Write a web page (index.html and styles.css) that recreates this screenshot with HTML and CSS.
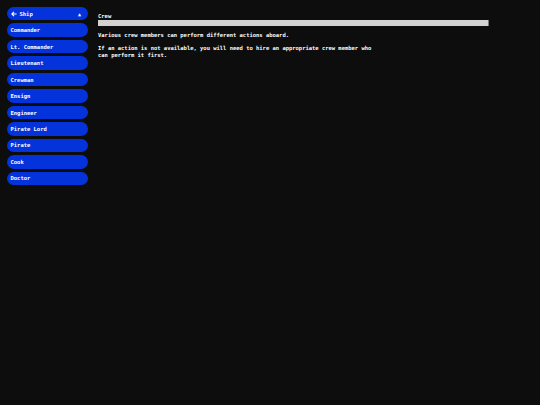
FILE: index.html
```html
<!DOCTYPE html>
<html>
<head>
<meta charset="utf-8">
<link rel="stylesheet" href="styles.css">
</head>
<body>
<div class="app">
  <nav class="sidebar">
    <button class="btn btn-head"><svg class="arrow" width="6" height="6" viewBox="0 0 6 6"><path d="M5.6 3H0.8M3 0.8L0.8 3L3 5.2" fill="none" stroke="#fff" stroke-width="1.1"/></svg><span class="label">Ship</span><span class="caret">▲</span></button>
    <button class="btn">Commander</button>
    <button class="btn">Lt. Commander</button>
    <button class="btn">Lieutenant</button>
    <button class="btn">Crewman</button>
    <button class="btn">Ensign</button>
    <button class="btn">Engineer</button>
    <button class="btn">Pirate Lord</button>
    <button class="btn">Pirate</button>
    <button class="btn">Cook</button>
    <button class="btn">Doctor</button>
  </nav>
  <main class="main">
    <div class="title">Crew</div>
    <div class="bar"></div>
    <p class="text">Various crew members can perform different actions aboard.</p>
    <p class="text">If an action is not available, you will need to hire an appropriate crew member who<br>can perform it first.</p>
  </main>
</div>
</body>
</html>
```
FILE: styles.css
```css
html, body {
  margin: 0;
  padding: 0;
  background: #0d0d0d;
  height: 100%;
}
body {
  font-family: "DejaVu Sans Mono", "Liberation Mono", monospace;
  font-weight: bold;
  font-size: 5.48px;
  color: #ffffff;
}
.app {
  display: flex;
  gap: 10px;
  padding: 7px;
}
.sidebar {
  width: 81px;
  display: flex;
  flex-direction: column;
  gap: 3.3px;
}
.btn {
  display: flex;
  align-items: center;
  height: 13.2px;
  padding: 0 0 0 3.5px;
  border: none;
  border-radius: 7px;
  background: #0433dc;
  color: #ffffff;
  font-family: inherit;
  font-weight: bold;
  font-size: 5.48px;
  text-align: left;
}
.btn-head .arrow {
  flex: none;
  margin-right: 3px;
}
.btn-head .label {
  flex: 1;
}
.btn-head .caret {
  font-size: 5px;
  margin-right: 7px;
}
.main {
  width: 391px;
  padding-top: 6px;
}
.title {
  line-height: 7px;
}
.bar {
  height: 6px;
  background: #d2d2d2;
  border-right: 1px solid #7a7a7a;
}
.text {
  margin: 5.5px 0 0 0;
  line-height: 7px;
}
.text + .text {
  margin-top: 6px;
}
```
